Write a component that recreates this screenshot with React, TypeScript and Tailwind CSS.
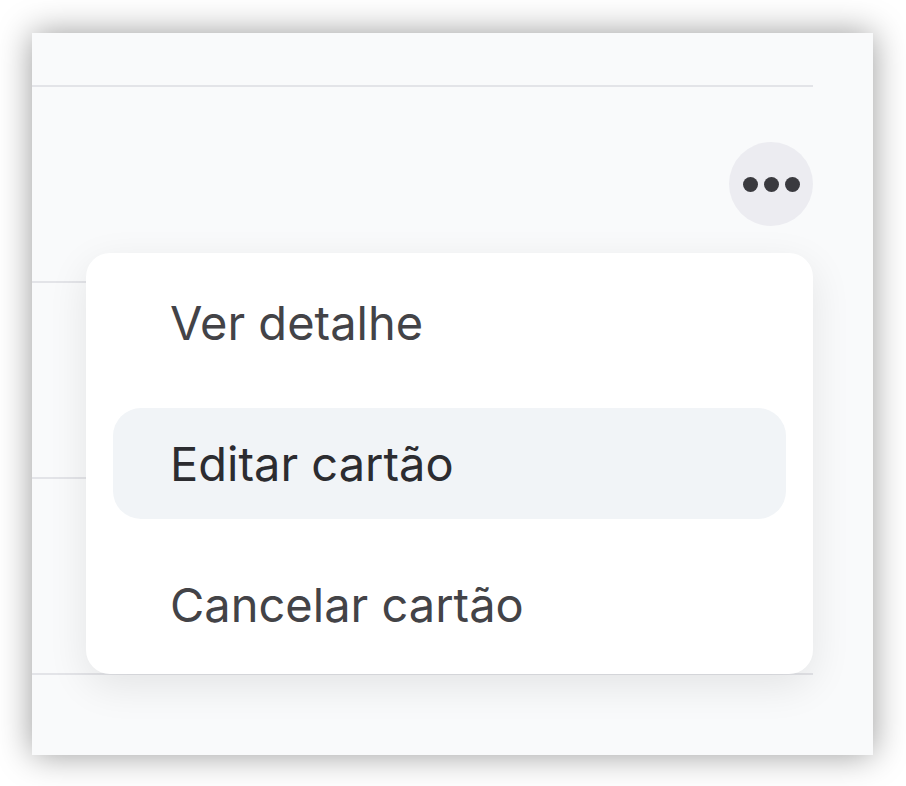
import React from 'react';

const items = ['Ver detalhe', 'Editar cartão', 'Cancelar cartão'];

export default function App() {
  return (
    <div className="min-h-screen bg-white p-[32px] pt-[33px]" style={{ fontFamily: 'Inter, "Noto Sans", sans-serif' }}>
      {/* Card list panel */}
      <div className="relative w-[841px] h-[722px] bg-[#f9fafb] shadow-[0_0_32px_rgba(0,0,0,0.4)]">
        <div className="pr-[60px]">
          <div className="h-[54px] border-b-2 border-[#e3e4e8]" />
          <div className="h-[196px] border-b-2 border-[#e3e4e8] flex items-center justify-end">
            <button className="w-[84px] h-[84px] rounded-full bg-[#ececf1] flex items-center justify-center gap-[6px]">
              <span className="w-[15px] h-[15px] rounded-full bg-[#3a3a3f]" />
              <span className="w-[15px] h-[15px] rounded-full bg-[#3a3a3f]" />
              <span className="w-[15px] h-[15px] rounded-full bg-[#3a3a3f]" />
            </button>
          </div>
          <div className="h-[196px] border-b-2 border-[#e3e4e8]" />
          <div className="h-[196px] border-b-2 border-[#e3e4e8]" />
        </div>

        {/* Dropdown menu */}
        <div className="absolute left-[54px] top-[220px] w-[727px] bg-white rounded-[24px] px-[27px] py-[14px] flex flex-col gap-[30px] shadow-[0_12px_40px_rgba(0,0,0,0.09)]">
          {items.map((label, i) => (
            <div
              key={label}
              className={
                i === 1
                  ? 'h-[111px] rounded-[28px] bg-[#f1f4f7] flex items-center pl-[57px] text-[47px] leading-none text-[#2c2c30]'
                  : 'h-[111px] rounded-[28px] flex items-center pl-[57px] text-[47px] leading-none text-[#434347]'
              }
            >
              {label}
            </div>
          ))}
        </div>
      </div>
    </div>
  );
}
